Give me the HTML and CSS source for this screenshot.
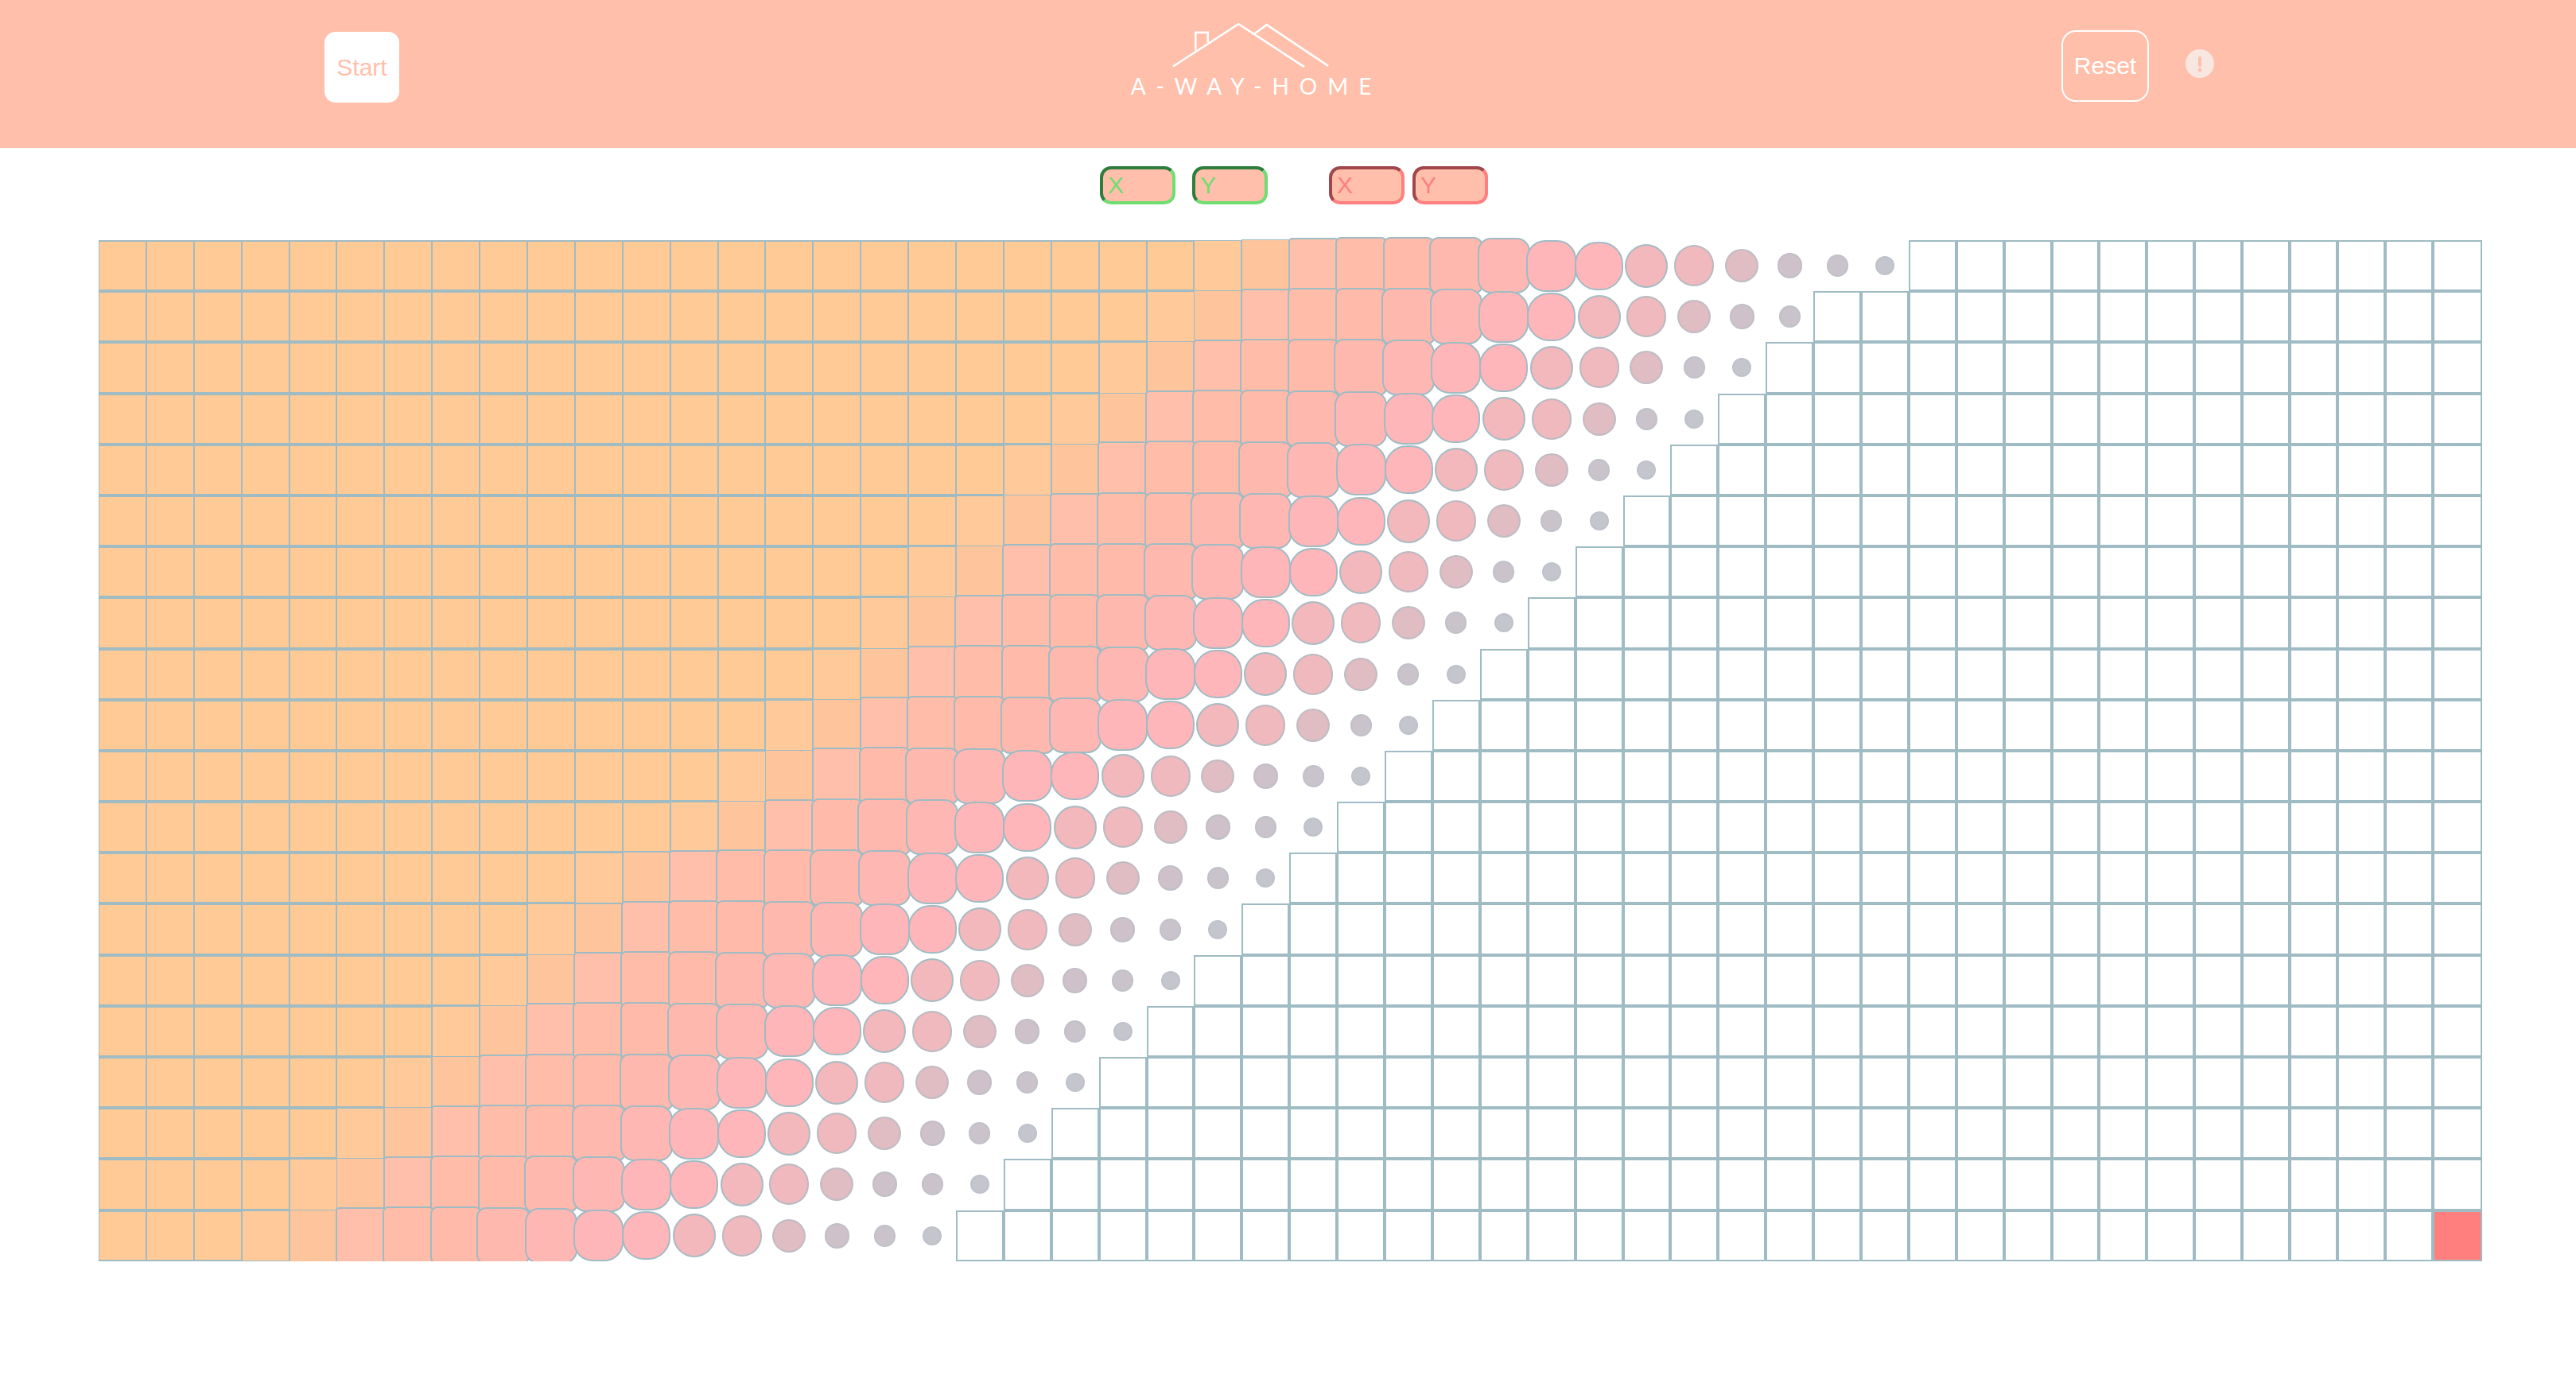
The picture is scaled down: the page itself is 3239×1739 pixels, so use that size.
FILE: index.html
```html
<!DOCTYPE html>
<html lang="en">
  <head>
    <meta charset="UTF-8" />
    <meta name="viewport" content="width=device-width, initial-scale=1.0" />
    <title>A-Way-Home</title>
    <link rel="stylesheet" href="styles.css">
  </head>

  <body>
    <header class="topbar">
      <button class="btn btn-start">Start</button>

      <div class="logo">
        <svg class="logo-house" viewBox="0 0 200 56" width="200" height="56">
          <path d="M2 54.5 84.3 1.2 167 55.2" />
          <path d="M104.3 13.5 119.7 2.2 197 53.9" />
          <path d="M30.3 34.5V11.9H45.7V24.5" />
        </svg>
        <div class="logo-text">A-WAY-HOME</div>
      </div>

      <button class="btn btn-reset">Reset</button>

      <svg class="alert-icon" viewBox="0 0 36 36" width="36" height="36">
        <circle cx="18" cy="18" r="18" fill="#f8e6e0" />
        <rect x="16" y="9" width="4" height="13" rx="2" fill="#ffbfaa" />
        <circle cx="18" cy="26" r="2.4" fill="#ffbfaa" />
      </svg>
    </header>

    <div class="coords">
      <input class="coord coord-start" placeholder="X" />
      <input class="coord coord-start" placeholder="Y" />
      <input class="coord coord-goal coord-goal-first" placeholder="X" />
      <input class="coord coord-goal" placeholder="Y" />
    </div>

    <div id="grid" class="grid"></div>

    <script src="grid.js"></script>
  </body>
</html>
```

FILE: styles.css
```css
* {
  box-sizing: border-box;
}

body {
  margin: 0;
  padding: 0;
  overflow: hidden;
  background-color: white;
  font-family: "Liberation Sans", Arial, sans-serif;
}

/* top bar */
.topbar {
  display: flex;
  align-items: flex-start;
  height: 186px;
  padding-left: 408px;
  background-color: #ffbfaa;
}

.btn {
  font-family: inherit;
  font-size: 30px;
  padding: 0;
}

.btn-start {
  width: 94px;
  height: 89px;
  margin-top: 40px;
  border: none;
  border-radius: 14px;
  background-color: white;
  color: #ffbfaa;
}

.btn-reset {
  width: 110px;
  height: 90px;
  margin-top: 38px;
  margin-left: 867px;
  border: 2px solid white;
  border-radius: 18px;
  background-color: transparent;
  color: white;
}

.alert-icon {
  margin-top: 62px;
  margin-left: 46px;
}

.logo {
  display: flex;
  flex-direction: column;
  align-items: center;
  width: 304px;
  margin-top: 29px;
  margin-left: 919px;
}

.logo-house {
  flex-shrink: 0;
}

.logo-house path {
  fill: none;
  stroke: white;
  stroke-width: 2.6;
}

.logo-text {
  margin-top: 6px;
  margin-right: -13px;
  font-family: Lato, sans-serif;
  font-size: 28px;
  font-weight: 400;
  line-height: 34px;
  letter-spacing: 13px;
  white-space: nowrap;
  color: white;
}

/* coordinate inputs */
.coords {
  display: flex;
  gap: 21px;
  padding-top: 23px;
  padding-left: 1383px;
}

.coord {
  width: 95px;
  height: 48px;
  padding: 0 0 0 6px;
  border-width: 4px;
  border-style: solid;
  border-radius: 14px;
  outline: none;
  background-color: #ffbfaa;
  font-family: inherit;
  font-size: 30px;
}

.coord-start {
  border-color: #2e7d3c #6fdd6f #6fdd6f #2e7d3c;
}

.coord-start::placeholder {
  color: #6fdd6f;
  opacity: 1;
}

.coord-goal {
  margin-left: -11px;
  border-color: #9f474c #ff7f7f #ff7f7f #9f474c;
}

.coord-goal-first {
  margin-left: 56px;
}

.coord-goal::placeholder {
  color: #ff7f7f;
  opacity: 1;
}

/* pathfinding grid */
.grid {
  display: grid;
  grid-template-columns: repeat(49, 59.9px) 62px;
  grid-template-rows: repeat(20, 64.2px);
  width: 2997px;
  margin-top: 45px;
  margin-left: 124px;
}

.cell {
  display: flex;
  align-items: center;
  justify-content: center;
}

.node {
  flex-shrink: 0;
  width: 100%;
  height: 100%;
  border: 2px solid #9fbbc3;
  background-color: white;
}

.node-done {
  border-width: 2px 1px;
  background-color: #ffca95;
}

.node-goal {
  background-color: #ff7f7f;
}
```

FILE: grid.js
```js
// frontier of the search: first unvisited column in each row
function frontier(row) {
  return row === 0 ? 38 : 37 - row;
}

// age (cells behind the frontier) -> look of the animated node
const steps = [
  { w: 24, h: 24, r: 12, c: "#c5c5cd", a: 0.2 },
  { w: 27, h: 28, r: 14, c: "#cbc3cb", a: 0.25 },
  { w: 31, h: 32, r: 16, c: "#cfc1c9", a: 0.3 },
  { w: 42, h: 42, r: 21, c: "#e0bcc3", a: 0.5 },
  { w: 50, h: 52, r: 26, c: "#f0b9bd", a: 0.7 },
  { w: 54, h: 55, r: 27, c: "#f2b8bc", a: 0.9 },
  { w: 61, h: 61, r: 28, c: "#ffb6ba", a: 1 },
  { w: 63, h: 65, r: 24, c: "#ffb6b9", a: 1 },
  { w: 66, h: 70, r: 17, c: "#ffb7b4", a: 1 },
  { w: 68, h: 72, r: 12, c: "#ffb8ad", a: 1 },
  { w: 65, h: 73, r: 9, c: "#ffbaa9", a: 1 },
  { w: 65, h: 73, r: 7, c: "#ffbca8", a: 1 },
  { w: 63, h: 71, r: 5, c: "#ffbfaa", a: 1 },
  { w: 60, h: 66, r: 0, c: "#fec59c", a: 1 },
  { w: 60, h: 64.2, r: 0, c: "#ffc99a", a: 1 },
];

// the upper rows are a little further along than the lower ones
function ageOf(row, col) {
  const d = frontier(row) - 1 - col;
  if (row === 1) return d + 1;
  if (row >= 2 && row <= 9 && d >= 2) return d + 1;
  if (row >= 10 && row <= 11 && d >= 11) return d + 1;
  return d;
}

const grid = document.getElementById("grid");

for (let row = 0; row < 20; row++) {
  for (let col = 0; col < 50; col++) {
    const cell = document.createElement("div");
    const node = document.createElement("div");
    cell.className = "cell";
    node.className = "node";

    const age = ageOf(row, col);

    if (row === 19 && col === 49) {
      node.classList.add("node-goal");
    } else if (col < frontier(row)) {
      if (age < steps.length) {
        const s = steps[age];
        node.style.width = s.w + "px";
        node.style.height = s.h + "px";
        node.style.borderRadius = s.r + "px";
        node.style.backgroundColor = s.c;
        node.style.borderColor = "rgba(159, 187, 195, " + s.a + ")";
        if (age > 12) node.style.borderWidth = "1px";
      } else {
        node.classList.add("node-done");
      }
    }

    cell.appendChild(node);
    grid.appendChild(cell);
  }
}
```
